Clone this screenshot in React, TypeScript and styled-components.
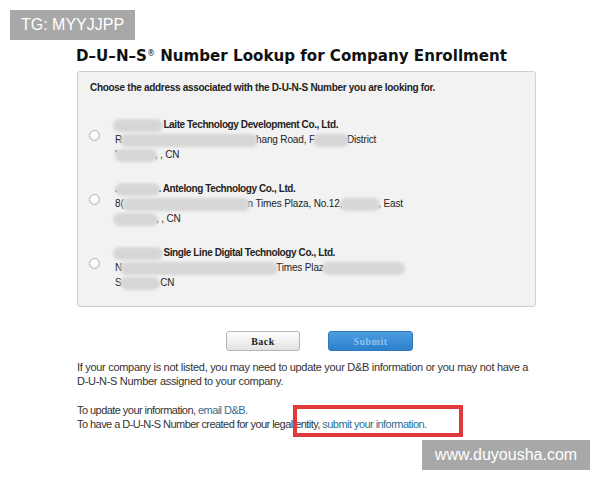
import React from "react";
import styled, { createGlobalStyle } from "styled-components";

const GlobalStyle = createGlobalStyle`
    html, body {
        margin     : 0;
        padding    : 0;
        background : #fff;
    }
`;

const Page = styled.div`
    position   : relative;
    width      : 600px;
    height     : 480px;
    overflow   : hidden;
    background : #fff;
`;

const Watermark = styled.div<{ $corner: "top" | "bottom" }>`
    position    : absolute;
    ${p => p.$corner === "top" ? "left: 10px; top: 10px; width: 125px;" : "right: 10px; top: 440px; width: 168px;"}
    height      : 30px;
    background  : #a8a8a8;
    color       : #fff;
    font-family : "Liberation Sans", Arial, sans-serif;
    font-size   : 16px;
    line-height : 30px;
    text-align  : center;
`;

const Main = styled.div`
    width   : 459px;
    padding : 43px 0 0 77px;
`;

const Title = styled.h1`
    margin      : 0 0 0 -1px;
    font-family : "DejaVu Sans", "Lucida Grande", sans-serif;
    font-weight : bold;
    font-size   : 15.1px;
    line-height : 22px;
    color       : #111;
    white-space : nowrap;
    sup {
        font-size      : 8px;
        vertical-align : 5px;
        font-weight    : normal;
    }
`;

const Panel = styled.div`
    margin-top     : 4px;
    height         : 236px;
    box-sizing     : border-box;
    background     : #f2f2f2;
    border         : 1px solid #cfcfcf;
    border-radius  : 3px;
    padding        : 9px 12px 0 12px;
    font-family    : "Liberation Sans", Arial, sans-serif;
    font-size      : 10px;
    letter-spacing : -0.15px;
    color          : #222;
`;

const Prompt = styled.div`
    font-weight    : bold;
    letter-spacing : -0.3px;
    line-height    : 14px;
    margin-bottom  : 22px;
`;

const Entry = styled.label`
    display               : grid;
    grid-template-columns : 25px 1fr;
    align-items           : start;
    margin-bottom         : 19px;
`;

const Radio = styled.span`
    width         : 9px;
    height        : 9px;
    margin        : 13px 0 0 -1px;
    border-radius : 50%;
    border        : 1px solid #b3b3b3;
    background    : radial-gradient(circle at 50% 40%, #fff 30%, #e6e6e6 100%);
`;

const Lines = styled.div`
    line-height : 15px;
    white-space : nowrap;
`;

const Name = styled.div`
    font-weight    : bold;
    letter-spacing : -0.4px;
`;

const Blur = styled.span<{ $w: number; $h?: number }>`
    display        : inline-block;
    width          : ${p => p.$w}px;
    height         : ${p => p.$h ?? 13}px;
    margin         : 0 -2px;
    vertical-align : middle;
    background     : #d6d6d6;
    border-radius  : 7px;
    filter         : blur(1.5px);
`;

const Actions = styled.div`
    display : flex;
    gap     : 28px;
    margin  : 24px 0 0 149px;
`;

const Button = styled.button<{ $primary?: boolean }>`
    width          : ${p => p.$primary ? 85 : 74}px;
    height         : 20px;
    padding        : 0;
    border-radius  : 3px;
    font-family    : "Liberation Serif", "Times New Roman", serif;
    font-weight    : bold;
    font-size      : 10px;
    letter-spacing : 0.5px;
    border         : 1px solid ${p => p.$primary ? "#2f79bd" : "#b5b5b5"};
    color          : ${p => p.$primary ? "#8fc3ee" : "#222"};
    background     : ${p => p.$primary
        ? "linear-gradient(#4b9de0, #2f80cc)"
        : "linear-gradient(#ffffff, #e2e2e2)"};
`;

const Text = styled.p<{ $tight?: boolean }>`
    margin         : 0;
    font-family    : "Liberation Sans", Arial, sans-serif;
    font-size      : 11px;
    letter-spacing : ${p => p.$tight ? -0.55 : -0.3}px;
    line-height    : 14px;
    color          : #333;
    white-space    : nowrap;
    & + & { margin-top : 15px; }
`;

const Link = styled.a`
    color           : #2f6f92;
    text-decoration : none;
`;

const Highlight = styled.div`
    position : absolute;
    left     : 293px;
    top      : 405px;
    width    : 162px;
    height   : 24px;
    border   : 4px solid #e0393c;
`;

const App = () => (
    <Page>
        <GlobalStyle />
        <Main>
            <Title>D–U–N–S<sup>®</sup> Number Lookup for Company Enrollment</Title>
            <Panel>
                <Prompt>Choose the address associated with the D-U-N-S Number you are looking for.</Prompt>
                <Entry>
                    <Radio />
                    <Lines>
                        <Name><Blur $w={50} /> Laite Technology Development Co., Ltd.</Name>
                        <div>R<Blur $w={138} />hang Road, F<Blur $w={36} />District</div>
                        <div>'<Blur $w={42} />, , CN</div>
                    </Lines>
                </Entry>
                <Entry>
                    <Radio />
                    <Lines>
                        <Name>.<Blur $w={45} />. Antelong Technology Co., Ltd.</Name>
                        <div>8(<Blur $w={128} />n Times Plaza, No.12,<Blur $w={40} />, East</div>
                        <div><Blur $w={45} />, , CN</div>
                    </Lines>
                </Entry>
                <Entry>
                    <Radio />
                    <Lines>
                        <Name><Blur $w={50} /> Single Line Digital Technology Co., Ltd.</Name>
                        <div>N<Blur $w={158} />Times Plaz<Blur $w={83} /></div>
                        <div>S<Blur $w={40} />  CN</div>
                    </Lines>
                </Entry>
            </Panel>
            <Actions>
                <Button>Back</Button>
                <Button $primary>Submit</Button>
            </Actions>
            <Text style={{ marginTop: 9 }}>
                If your company is not listed, you may need to update your D&amp;B information or you may not have a<br />
                D-U-N-S Number assigned to your company.
            </Text>
            <Text $tight>
                To update your information, <Link href="#">email D&amp;B.</Link><br />
                To have a D-U-N-S Number created for your legal entity, <Link href="#">submit your information.</Link>
            </Text>
        </Main>
        <Highlight />
        <Watermark $corner="top">TG: MYYJJPP</Watermark>
        <Watermark $corner="bottom">www.duyousha.com</Watermark>
    </Page>
);

export default App;
